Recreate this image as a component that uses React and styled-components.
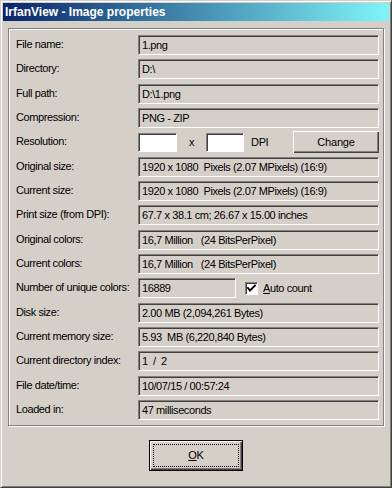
import React from "react";
import styled, { createGlobalStyle } from "styled-components";

const GlobalStyle = createGlobalStyle`
	body {
		margin: 0;
		background: #d4d0c8;
		font-family: "Liberation Sans", Arial, sans-serif;
		font-size: 11px;
		color: #000;
	}
`;

const Window = styled.div`
	width: 392px;
	height: 488px;
	box-sizing: border-box;
	background: #d4d0c8;
	border: 1px solid;
	border-color: #d4d0c8 #404040 #404040 #d4d0c8;
	box-shadow: inset 1px 1px #ffffff, inset -1px -1px #808080;
	padding: 2px;
	display: flex;
	flex-direction: column;
`;

const TitleBar = styled.div`
	height: 18px;
	flex-shrink: 0;
	display: flex;
	align-items: center;
	padding-left: 2px;
	background: linear-gradient(90deg, #0a246a 0%, #7ef6f8 100%);
	color: #ffffff;
	font-weight: bold;
	font-size: 12px;
`;

const Body = styled.div`
	flex: 1;
	display: flex;
	flex-direction: column;
	padding: 7px 5px 14px 5px;
`;

const GroupBox = styled.div`
	border: 1px solid #808080;
	box-shadow: inset 1px 1px #ffffff, 1px 1px #ffffff;
	padding: 6px 4px 5px 7px;
	display: flex;
	flex-direction: column;
	gap: 4.333px;
`;

const Row = styled.div`
	height: 20px;
	display: flex;
	align-items: center;
	letter-spacing: -0.4px;
`;

const Label = styled.div`
	width: 122px;
	flex-shrink: 0;
	margin-top: -2px;
	white-space: nowrap;
`;

const sunken = `
	box-sizing: border-box;
	border: 1px solid;
	border-color: #808080 #ffffff #ffffff #808080;
	box-shadow: inset 1px 1px #404040;
`;

const Field = styled.div`
	${sunken}
	height: 20px;
	flex: ${(p) => (p.$width ? "none" : "1")};
	width: ${(p) => (p.$width ? `${p.$width}px` : "auto")};
	padding-left: 3px;
	line-height: 18px;
	white-space: pre;
	overflow: hidden;
	background: #d4d0c8;
`;

const Input = styled.div`
	${sunken}
	height: 19px;
	width: ${(p) => p.$width}px;
	background: #ffffff;
`;

const Text = styled.span`
	margin: ${(p) => p.$margin || "0"};
	white-space: nowrap;
`;

const Button = styled.button`
	box-sizing: border-box;
	width: ${(p) => p.$width}px;
	height: ${(p) => p.$height}px;
	margin-left: ${(p) => p.$push ? "auto" : "0"};
	background: #d4d0c8;
	font-family: "Liberation Sans", Arial, sans-serif;
	font-size: 11px;
	letter-spacing: -0.2px;
	color: #000;
	padding: 0;
	border: ${(p) => (p.$default ? "1px solid #000000" : "none")};
	box-shadow: inset 1px 1px #ffffff, inset -1px -1px #404040,
		inset -2px -2px #808080;
	outline: ${(p) => (p.$default ? "1px dotted #000000" : "none")};
	outline-offset: -5px;
	align-self: ${(p) => (p.$center ? "center" : "auto")};
	margin-top: ${(p) => (p.$center ? "14px" : "0")};
	flex-shrink: 0;
`;

const CheckBox = styled.div`
	${sunken}
	width: 13px;
	height: 13px;
	margin-left: 9px;
	background: #ffffff;
	display: flex;
	align-items: center;
	justify-content: center;
`;

const Check = () => (
	<svg width="11" height="11" viewBox="0 0 11 11">
		<polyline
			points="2,5 4,7.5 9,2.5"
			fill="none"
			stroke="#000"
			strokeWidth="1.9"
			strokeLinecap="square"
		/>
	</svg>
);

const rowsTop = [
	["File name:", "1.png"],
	["Directory:", "D:\\"],
	["Full path:", "D:\\1.png"],
	["Compression:", "PNG - ZIP"],
];

const rowsMiddle = [
	["Original size:", "1920 x 1080  Pixels (2.07 MPixels) (16:9)"],
	["Current size:", "1920 x 1080  Pixels (2.07 MPixels) (16:9)"],
	["Print size (from DPI):", "67.7 x 38.1 cm; 26.67 x 15.00 inches"],
	["Original colors:", "16,7 Million   (24 BitsPerPixel)"],
	["Current colors:", "16,7 Million   (24 BitsPerPixel)"],
];

const rowsBottom = [
	["Disk size:", "2.00 MB (2,094,261 Bytes)"],
	["Current memory size:", "5.93  MB (6,220,840 Bytes)"],
	["Current directory index:", "1  /  2"],
	["File date/time:", "10/07/15 / 00:57:24"],
	["Loaded in:", "47 milliseconds"],
];

const InfoRow = ({ label, value }) => (
	<Row>
		<Label>{label}</Label>
		<Field>{value}</Field>
	</Row>
);

export default function App() {
	return (
		<>
			<GlobalStyle />
			<Window>
				<TitleBar>IrfanView - Image properties</TitleBar>
				<Body>
					<GroupBox>
						{rowsTop.map(([l, v]) => (
							<InfoRow key={l} label={l} value={v} />
						))}
						<Row>
							<Label>Resolution:</Label>
							<Input $width={39} />
							<Text $margin="0 12px">x</Text>
							<Input $width={38} />
							<Text $margin="0 0 0 7px">DPI</Text>
							<Button $width={86} $height={22} $push>
								Chan<u>g</u>e
							</Button>
						</Row>
						{rowsMiddle.map(([l, v]) => (
							<InfoRow key={l} label={l} value={v} />
						))}
						<Row>
							<Label>Number of unique colors:</Label>
							<Field $width={98}>16889</Field>
							<CheckBox>
								<Check />
							</CheckBox>
							<Text $margin="0 0 0 5px">
								<u>A</u>uto count
							</Text>
						</Row>
						{rowsBottom.map(([l, v]) => (
							<InfoRow key={l} label={l} value={v} />
						))}
					</GroupBox>
					<Button $width={94} $height={31} $default $center>
						<u>O</u>K
					</Button>
				</Body>
			</Window>
		</>
	);
}
